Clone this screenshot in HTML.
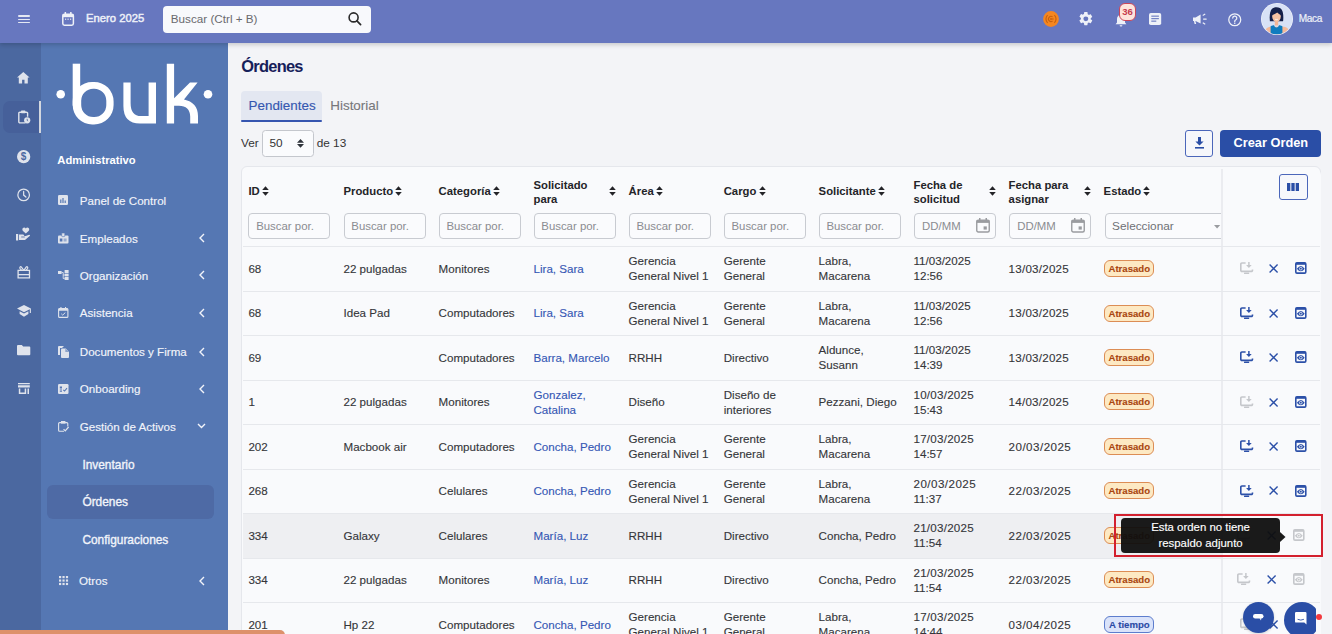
<!DOCTYPE html>
<html><head><meta charset="utf-8">
<style>
*{box-sizing:border-box;margin:0;padding:0}
html,body{width:1332px;height:634px;overflow:hidden;background:#f3f4f7;font-family:"Liberation Sans",sans-serif;color:#333;position:relative}
.abs{position:absolute}
.t{position:absolute;white-space:nowrap}
svg{overflow:visible}
</style></head><body>
<div class="abs" style="left:0.00px;top:43.00px;width:41.00px;height:591.00px;background:#4b68a0"></div>
<div class="abs" style="left:41.00px;top:43.00px;width:187.00px;height:591.00px;background:#5577b3"></div>
<div class="abs" style="left:3.40px;top:100.70px;width:36.10px;height:32.30px;background:#46609a;border-radius:7px 0 0 7px"></div>
<div class="abs" style="left:38.90px;top:100.50px;width:2.30px;height:32.70px;background:#d3d7df"></div>
<svg class="abs" style="left:17.40px;top:72.30px;" width="12.6" height="11.4" viewBox="0 0 12.6 11.4"><path fill="#dfe3ec" d="M6.3 0L0 5.6h1.8v5.8h3.3V7.8h2.4v3.6h3.3V5.6h1.8z"/></svg>
<svg class="abs" style="left:18.00px;top:110.20px;" width="12.5" height="14" viewBox="0 0 12.5 14"><path fill="none" stroke="#dfe3ec" stroke-width="1.4" d="M7.5 12.9H1.9a1.1 1.1 0 0 1-1.1-1.1V3.3a1.1 1.1 0 0 1 1.1-1.1h6.6a1.1 1.1 0 0 1 1.1 1.1v3.4"/><rect x="3" y="0.6" width="4.4" height="2.6" rx=".6" fill="#dfe3ec"/><circle cx="9.2" cy="10.3" r="3.1" fill="#dfe3ec"/><path d="M9.2 8.8v1.6l.9.6" stroke="#46609a" stroke-width=".8" fill="none"/></svg>
<svg class="abs" style="left:17.00px;top:150.00px;" width="13.3" height="13.3" viewBox="0 0 13.3 13.3"><circle cx="6.65" cy="6.65" r="6.65" fill="#dfe3ec"/><text x="6.65" y="10.3" font-size="10" font-weight="bold" text-anchor="middle" fill="#4b68a0" font-family="Liberation Sans">$</text></svg>
<svg class="abs" style="left:17.00px;top:188.00px;" width="13.3" height="13.8" viewBox="0 0 14 14"><circle cx="7" cy="7" r="6.1" fill="none" stroke="#dfe3ec" stroke-width="1.3"/><path d="M7 3.4V7.2l2.4 2" fill="none" stroke="#dfe3ec" stroke-width="1.3" stroke-linecap="round"/></svg>
<svg class="abs" style="left:15.70px;top:227.30px;" width="14.6" height="13.7" viewBox="0 0 14.6 13.7"><path fill="#dfe3ec" d="M9.8 6.6L7 4C5.8 2.9 6.3.6 8.1.6c.8 0 1.3.4 1.7.9.4-.5.9-.9 1.7-.9 1.8 0 2.3 2.3 1.1 3.4z"/><rect x="0" y="7" width="2.2" height="6.5" fill="#dfe3ec"/><path fill="#dfe3ec" d="M3 7.6h3.4c1 0 1.7.5 1.9 1.3h1.4l3.5-1.2c.8 0 1.2.9.5 1.4l-4.7 3.8H3z"/><path fill="#4b68a0" d="M5.2 9.6h3.6v.8H5.2z"/></svg>
<svg class="abs" style="left:16.70px;top:265.80px;" width="13.6" height="12.7" viewBox="0 0 13.6 12.7"><path fill="none" stroke="#dfe3ec" stroke-width="1.3" d="M1.1 4.3h11.4v7.6H1.1z"/><path fill="#dfe3ec" d="M1 8h11.6v1.3H1z"/><path fill="none" stroke="#dfe3ec" stroke-width="1.2" d="M6.8 4.3L4.3 1c-.9-.9-2 .4-1.2 1.6L4.6 4.3M6.8 4.3L9.3 1c.9-.9 2 .4 1.2 1.6L9 4.3"/></svg>
<svg class="abs" style="left:16.70px;top:305.20px;" width="14.6" height="11.7" viewBox="0 0 14.6 11.7"><path fill="#dfe3ec" d="M7 0L0 3.6l7 3.7 5.8-3V8h1.1V3.6z"/><path fill="#dfe3ec" d="M2.6 6.2v2.8L7 11.7l4.4-2.7V6.2L7 8.5z"/></svg>
<svg class="abs" style="left:17.00px;top:345.00px;" width="13.3" height="10.3" viewBox="0 0 13.3 10.3"><path fill="#dfe3ec" d="M0 1A1 1 0 0 1 1 0h3.8l1.4 1.5H12.3a1 1 0 0 1 1 1V9.3a1 1 0 0 1-1 1H1a1 1 0 0 1-1-1z"/></svg>
<svg class="abs" style="left:17.60px;top:383.20px;" width="11.8" height="11" viewBox="0 0 11.8 11"><path fill="#dfe3ec" d="M0 0h11.8v1.3H0zM0 2.2h11.8v2.4H0zM.8 5.5h1.5v3.9h4.4V5.5h1.5V11H.8zM9.5 5.5H11V11H9.5z"/></svg>
<svg class="abs" style="left:0.00px;top:0.00px;" width="228" height="130" viewBox="0 0 228 130"><circle cx="60.7" cy="94.2" r="4.3" fill="#ffffff"/><circle cx="208" cy="94.2" r="4.3" fill="#ffffff"/><rect x="72.7" y="63.7" width="7.5" height="42" fill="#ffffff"/><path fill="#ffffff" fill-rule="evenodd" d="M92.2 81.9H94.1A19.5 19.5 0 0 1 113.6 101.4V105.0A19.5 19.5 0 0 1 94.1 124.5H92.2A19.5 19.5 0 0 1 72.7 105.0V101.4A19.5 19.5 0 0 1 92.2 81.9Z M93.2 88.7H94.30000000000001A12 12 0 0 1 106.30000000000001 100.7V105.1A12 12 0 0 1 94.30000000000001 117.1H93.2A12 12 0 0 1 81.2 105.1V100.7A12 12 0 0 1 93.2 88.7Z"/><path fill="#ffffff" d="M123.4 82.4H130.6V103Q130.6 116.1 141 116.1H148.6V82.4H156V123.6H140Q123.4 123.6 123.4 106Z"/><path fill="#ffffff" d="M166.8 63.7H174.1V98.3L190 82.4H197.6L184 99.6C193 101.5 198 107 198 116V123.6H190.2V116.5C190.2 109.5 186 105.7 179 105.7H174.1V123.6H166.8Z"/></svg>
<div class="t " style="left:57.30px;top:153.50px;font-size:11.2px;line-height:13.44px;font-weight:bold;color:#fff;">Administrativo</div>
<div class="t " style="left:79.80px;top:193.72px;font-size:11.6px;line-height:13.92px;font-weight:normal;color:#f2f4fa;-webkit-text-stroke:0.15px #f2f4fa">Panel de Control</div>
<svg class="abs" style="left:58.00px;top:195.20px;" width="10" height="10" viewBox="0 0 10 10"><rect width="10" height="10" rx="1.3" fill="#dfe3ec"/><path fill="#5577b3" d="M2.2 4.5h1.2v3.5H2.2zM4.4 3h1.2v5H4.4zM6.6 5.5h1.2V8H6.6z"/></svg>
<div class="t " style="left:79.80px;top:231.82px;font-size:11.6px;line-height:13.92px;font-weight:normal;color:#f2f4fa;-webkit-text-stroke:0.15px #f2f4fa">Empleados</div>
<svg class="abs" style="left:198.50px;top:233.30px;" width="6" height="10" viewBox="0 0 6 10"><path d="M5 1L1 5l4 4" fill="none" stroke="#f2f4fa" stroke-width="1.4"/></svg>
<svg class="abs" style="left:58.00px;top:232.80px;" width="10.5" height="10.5" viewBox="0 0 10.5 10.5"><rect x="0" y="2.4" width="10.5" height="8.1" rx="1" fill="#dfe3ec"/><rect x="3.7" y="0" width="3.1" height="3.6" rx=".6" fill="#dfe3ec" stroke="#5577b3" stroke-width=".6"/><path fill="#5577b3" d="M1.8 5.5h2.6v3H1.8zM5.6 5.8h3v.8h-3zM5.6 7.4h3v.8h-3z"/></svg>
<div class="t " style="left:79.80px;top:268.82px;font-size:11.6px;line-height:13.92px;font-weight:normal;color:#f2f4fa;-webkit-text-stroke:0.15px #f2f4fa">Organización</div>
<svg class="abs" style="left:198.50px;top:270.30px;" width="6" height="10" viewBox="0 0 6 10"><path d="M5 1L1 5l4 4" fill="none" stroke="#f2f4fa" stroke-width="1.4"/></svg>
<svg class="abs" style="left:58.00px;top:270.30px;" width="11" height="10" viewBox="0 0 11 10"><rect x="0" y="1" width="3.6" height="3" fill="#dfe3ec"/><rect x="6.6" y="0" width="4" height="3" fill="#dfe3ec"/><rect x="6.6" y="3.6" width="4" height="2.8" fill="#dfe3ec"/><rect x="6.6" y="7" width="4" height="3" fill="#dfe3ec"/><path d="M3.6 2.5h1.6v6h1.4M5.2 5h1.4" stroke="#dfe3ec" stroke-width=".9" fill="none"/></svg>
<div class="t " style="left:79.80px;top:306.42px;font-size:11.6px;line-height:13.92px;font-weight:normal;color:#f2f4fa;-webkit-text-stroke:0.15px #f2f4fa">Asistencia</div>
<svg class="abs" style="left:198.50px;top:307.90px;" width="6" height="10" viewBox="0 0 6 10"><path d="M5 1L1 5l4 4" fill="none" stroke="#f2f4fa" stroke-width="1.4"/></svg>
<svg class="abs" style="left:58.00px;top:307.40px;" width="10.5" height="11" viewBox="0 0 10.5 11"><rect x=".6" y="1.6" width="9.3" height="8.8" rx="1" fill="none" stroke="#dfe3ec" stroke-width="1.1"/><path fill="#dfe3ec" d="M.6 1.6h9.3v2.2H.6zM2.4 0h1.1v2H2.4zM7 0h1.1v2H7z"/><path d="M3.3 6.8l1.4 1.3 2.6-2.5" fill="none" stroke="#dfe3ec" stroke-width="1"/></svg>
<div class="t " style="left:79.80px;top:345.22px;font-size:11.6px;line-height:13.92px;font-weight:normal;color:#f2f4fa;-webkit-text-stroke:0.15px #f2f4fa">Documentos y Firma</div>
<svg class="abs" style="left:198.50px;top:346.70px;" width="6" height="10" viewBox="0 0 6 10"><path d="M5 1L1 5l4 4" fill="none" stroke="#f2f4fa" stroke-width="1.4"/></svg>
<svg class="abs" style="left:57.50px;top:345.70px;" width="11" height="12" viewBox="0 0 11 12"><path fill="#dfe3ec" d="M0 1a1 1 0 0 1 1-1h5L4 2H2v7H0z"/><path fill="#dfe3ec" d="M3 3.5a1 1 0 0 1 1-1h3.8L11 5.7V11a1 1 0 0 1-1 1H4a1 1 0 0 1-1-1z"/><path fill="#5577b3" d="M7.3 2.6v3.5H11z" opacity=".6"/></svg>
<div class="t " style="left:79.80px;top:382.42px;font-size:11.6px;line-height:13.92px;font-weight:normal;color:#f2f4fa;-webkit-text-stroke:0.15px #f2f4fa">Onboarding</div>
<svg class="abs" style="left:198.50px;top:383.90px;" width="6" height="10" viewBox="0 0 6 10"><path d="M5 1L1 5l4 4" fill="none" stroke="#f2f4fa" stroke-width="1.4"/></svg>
<svg class="abs" style="left:58.00px;top:383.90px;" width="10.5" height="10" viewBox="0 0 10.5 10"><rect width="10.5" height="10" rx="1.2" fill="#dfe3ec"/><path fill="#5577b3" d="M1.8 2.4h2.2v2.2H1.8zM1.8 5.6h2.2v.9H1.8zM1.8 7.2h2.2v.9H1.8z"/><path d="M5.3 5.8l1.3 1.2 2.4-2.8" fill="none" stroke="#5577b3" stroke-width="1.1"/></svg>
<div class="t " style="left:79.80px;top:419.72px;font-size:11.6px;line-height:13.92px;font-weight:normal;color:#f2f4fa;-webkit-text-stroke:0.15px #f2f4fa">Gestión de Activos</div>
<svg class="abs" style="left:196.50px;top:423.20px;" width="9" height="6" viewBox="0 0 9 6"><path d="M1 1l3.5 3.5L8 1" fill="none" stroke="#f2f4fa" stroke-width="1.4"/></svg>
<svg class="abs" style="left:58.00px;top:420.70px;" width="11" height="11" viewBox="0 0 11 11"><path d="M6 10.2H1.6a1 1 0 0 1-1-1V2.6a1 1 0 0 1 1-1h7.2a1 1 0 0 1 1 1v3" fill="none" stroke="#dfe3ec" stroke-width="1.1"/><path fill="#dfe3ec" d="M3 0h4.4v2.6H3z"/><path d="M5.6 8.2l1.6 1.6L10.6 6" fill="none" stroke="#dfe3ec" stroke-width="1.2"/></svg>
<div class="abs" style="left:47.00px;top:485.40px;width:167.10px;height:34.10px;background:#4e6aa5;border-radius:6px"></div>
<div class="t " style="left:82.40px;top:457.94px;font-size:11.9px;line-height:14.28px;font-weight:normal;color:#f2f4fa;-webkit-text-stroke:0.35px #f2f4fa">Inventario</div>
<div class="t " style="left:82.40px;top:495.34px;font-size:11.9px;line-height:14.28px;font-weight:normal;color:#f2f4fa;-webkit-text-stroke:0.35px #f2f4fa">Órdenes</div>
<div class="t " style="left:82.40px;top:532.54px;font-size:11.9px;line-height:14.28px;font-weight:normal;color:#f2f4fa;-webkit-text-stroke:0.35px #f2f4fa">Configuraciones</div>
<div class="t " style="left:79.10px;top:574.12px;font-size:11.6px;line-height:13.92px;font-weight:normal;color:#f2f4fa;-webkit-text-stroke:0.15px #f2f4fa">Otros</div>
<svg class="abs" style="left:58.50px;top:576.00px;" width="9.2" height="9.2" viewBox="0 0 9.2 9.2"><rect x="0.0" y="0.0" width="2.2" height="2.2" fill="#dfe3ec"/><rect x="0.0" y="3.45" width="2.2" height="2.2" fill="#dfe3ec"/><rect x="0.0" y="6.9" width="2.2" height="2.2" fill="#dfe3ec"/><rect x="3.45" y="0.0" width="2.2" height="2.2" fill="#dfe3ec"/><rect x="3.45" y="3.45" width="2.2" height="2.2" fill="#dfe3ec"/><rect x="3.45" y="6.9" width="2.2" height="2.2" fill="#dfe3ec"/><rect x="6.9" y="0.0" width="2.2" height="2.2" fill="#dfe3ec"/><rect x="6.9" y="3.45" width="2.2" height="2.2" fill="#dfe3ec"/><rect x="6.9" y="6.9" width="2.2" height="2.2" fill="#dfe3ec"/></svg>
<svg class="abs" style="left:198.50px;top:576.00px;" width="6" height="10" viewBox="0 0 6 10"><path d="M5 1L1 5l4 4" fill="none" stroke="#f2f4fa" stroke-width="1.4"/></svg>
<div class="t " style="left:241.30px;top:57.38px;font-size:16.4px;line-height:19.68px;font-weight:bold;color:#16205a;letter-spacing:-0.72px">Órdenes</div>
<div class="abs" style="left:241.30px;top:90.80px;width:80.70px;height:30.70px;background:#e3e7f1;border-radius:4px 4px 0 0"></div>
<div class="abs" style="left:241.30px;top:119.80px;width:80.70px;height:1.90px;background:#3656b0;border-radius:1px"></div>
<div class="t " style="left:248.60px;top:98.12px;font-size:13.4px;line-height:16.08px;font-weight:normal;color:#3557b0;-webkit-text-stroke:0.15px #3557b0">Pendientes</div>
<div class="t " style="left:330.30px;top:98.12px;font-size:13.4px;line-height:16.08px;font-weight:normal;color:#76777b;-webkit-text-stroke:0.1px #76777b">Historial</div>
<div class="t " style="left:241.00px;top:135.83px;font-size:11.8px;line-height:14.16px;font-weight:normal;color:#333;">Ver</div>
<div class="abs" style="left:262.40px;top:130.20px;width:51.20px;height:26.60px;background:#fafbfd;border:1px solid #c4c7cd;border-radius:3.5px"></div>
<div class="t " style="left:269.50px;top:136.03px;font-size:11.8px;line-height:14.16px;font-weight:normal;color:#333;">50</div>
<svg class="abs" style="left:296.90px;top:139.00px;" width="7" height="8.8" viewBox="0 0 7 8.8"><path d="M3.5 0L7 3.7H0zM3.5 8.8L7 5.1H0z" fill="#2f343b"/></svg>
<div class="t " style="left:316.70px;top:135.83px;font-size:11.8px;line-height:14.16px;font-weight:normal;color:#333;">de 13</div>
<div class="abs" style="left:1185.10px;top:130.00px;width:28.00px;height:26.50px;background:#f6f7fb;border:1px solid #4b66ba;border-radius:3px"></div>
<svg class="abs" style="left:1193.60px;top:137.30px;" width="11" height="12" viewBox="0 0 11 12"><path d="M4 0h3v4.6h2.6L5.5 8.6 1.4 4.6H4z" fill="#2a4ea6"/><rect x="1" y="10" width="9" height="1.6" fill="#2a4ea6"/></svg>
<div class="abs" style="left:1219.80px;top:130.00px;width:100.90px;height:26.50px;background:#2a4ea6;border-radius:4px"></div>
<div class="t " style="left:1233.50px;top:135.48px;font-size:12.8px;line-height:15.36px;font-weight:bold;color:#fff;">Crear Orden</div>
<div class="abs" style="left:241.10px;top:165.80px;width:1080.10px;height:554.20px;background:#f9fafc;border:1px solid #e5e7ec;border-radius:6px"></div>
<div class="abs" style="left:248.40px;top:185.33px;height:13.5px;display:flex;align-items:center;white-space:nowrap;font-size:11.3px;line-height:13.5px;font-weight:bold;color:#242428">ID<svg width="7" height="10" viewBox="0 0 7 10" style="flex:none;margin-left:2.2px;position:relative;top:-1px"><path d="M3.5 0.2L6.8 4.1H.2zM3.5 9.8L6.8 5.9H.2z" fill="#242428"/></svg></div>
<div class="abs" style="left:343.50px;top:185.33px;height:13.5px;display:flex;align-items:center;white-space:nowrap;font-size:11.3px;line-height:13.5px;font-weight:bold;color:#242428">Producto<svg width="7" height="10" viewBox="0 0 7 10" style="flex:none;margin-left:2.2px;position:relative;top:-1px"><path d="M3.5 0.2L6.8 4.1H.2zM3.5 9.8L6.8 5.9H.2z" fill="#242428"/></svg></div>
<div class="abs" style="left:438.60px;top:185.33px;height:13.5px;display:flex;align-items:center;white-space:nowrap;font-size:11.3px;line-height:13.5px;font-weight:bold;color:#242428">Categoría<svg width="7" height="10" viewBox="0 0 7 10" style="flex:none;margin-left:2.2px;position:relative;top:-1px"><path d="M3.5 0.2L6.8 4.1H.2zM3.5 9.8L6.8 5.9H.2z" fill="#242428"/></svg></div>
<div class="t " style="left:533.50px;top:178.50px;font-size:11.3px;line-height:13.56px;font-weight:bold;color:#242428;">Solicitado</div>
<div class="t " style="left:533.50px;top:192.70px;font-size:11.3px;line-height:13.56px;font-weight:bold;color:#242428;">para</div>
<svg class="abs" style="left:608.80px;top:186.00px;" width="7" height="10" viewBox="0 0 7 10"><path d="M3.5 0.2L6.8 4.1H.2zM3.5 9.8L6.8 5.9H.2z" fill="#242428"/></svg>
<div class="abs" style="left:628.60px;top:185.33px;height:13.5px;display:flex;align-items:center;white-space:nowrap;font-size:11.3px;line-height:13.5px;font-weight:bold;color:#242428">Área<svg width="7" height="10" viewBox="0 0 7 10" style="flex:none;margin-left:2.2px;position:relative;top:-1px"><path d="M3.5 0.2L6.8 4.1H.2zM3.5 9.8L6.8 5.9H.2z" fill="#242428"/></svg></div>
<div class="abs" style="left:723.70px;top:185.33px;height:13.5px;display:flex;align-items:center;white-space:nowrap;font-size:11.3px;line-height:13.5px;font-weight:bold;color:#242428">Cargo<svg width="7" height="10" viewBox="0 0 7 10" style="flex:none;margin-left:2.2px;position:relative;top:-1px"><path d="M3.5 0.2L6.8 4.1H.2zM3.5 9.8L6.8 5.9H.2z" fill="#242428"/></svg></div>
<div class="abs" style="left:818.60px;top:185.33px;height:13.5px;display:flex;align-items:center;white-space:nowrap;font-size:11.3px;line-height:13.5px;font-weight:bold;color:#242428">Solicitante<svg width="7" height="10" viewBox="0 0 7 10" style="flex:none;margin-left:2.2px;position:relative;top:-1px"><path d="M3.5 0.2L6.8 4.1H.2zM3.5 9.8L6.8 5.9H.2z" fill="#242428"/></svg></div>
<div class="t " style="left:913.50px;top:178.50px;font-size:11.3px;line-height:13.56px;font-weight:bold;color:#242428;">Fecha de</div>
<div class="t " style="left:913.50px;top:192.70px;font-size:11.3px;line-height:13.56px;font-weight:bold;color:#242428;">solicitud</div>
<svg class="abs" style="left:989.00px;top:186.00px;" width="7" height="10" viewBox="0 0 7 10"><path d="M3.5 0.2L6.8 4.1H.2zM3.5 9.8L6.8 5.9H.2z" fill="#242428"/></svg>
<div class="t " style="left:1008.60px;top:178.50px;font-size:11.3px;line-height:13.56px;font-weight:bold;color:#242428;">Fecha para</div>
<div class="t " style="left:1008.60px;top:192.70px;font-size:11.3px;line-height:13.56px;font-weight:bold;color:#242428;">asignar</div>
<svg class="abs" style="left:1084.00px;top:186.00px;" width="7" height="10" viewBox="0 0 7 10"><path d="M3.5 0.2L6.8 4.1H.2zM3.5 9.8L6.8 5.9H.2z" fill="#242428"/></svg>
<div class="abs" style="left:1103.60px;top:185.33px;height:13.5px;display:flex;align-items:center;white-space:nowrap;font-size:11.3px;line-height:13.5px;font-weight:bold;color:#242428">Estado<svg width="7" height="10" viewBox="0 0 7 10" style="flex:none;margin-left:2.2px;position:relative;top:-1px"><path d="M3.5 0.2L6.8 4.1H.2zM3.5 9.8L6.8 5.9H.2z" fill="#242428"/></svg></div>
<div class="abs" style="left:248.40px;top:213.2px;width:82px;height:26.2px;border:1px solid #c8cbd1;border-radius:4px;background:#fafbfd;overflow:hidden"><div class="t" style="left:6.8px;top:4.9px;font-size:11.4px;line-height:15px;color:#8a8c91">Buscar por.</div></div>
<div class="abs" style="left:343.50px;top:213.2px;width:82px;height:26.2px;border:1px solid #c8cbd1;border-radius:4px;background:#fafbfd;overflow:hidden"><div class="t" style="left:6.8px;top:4.9px;font-size:11.4px;line-height:15px;color:#8a8c91">Buscar por.</div></div>
<div class="abs" style="left:438.60px;top:213.2px;width:82px;height:26.2px;border:1px solid #c8cbd1;border-radius:4px;background:#fafbfd;overflow:hidden"><div class="t" style="left:6.8px;top:4.9px;font-size:11.4px;line-height:15px;color:#8a8c91">Buscar por.</div></div>
<div class="abs" style="left:533.50px;top:213.2px;width:82px;height:26.2px;border:1px solid #c8cbd1;border-radius:4px;background:#fafbfd;overflow:hidden"><div class="t" style="left:6.8px;top:4.9px;font-size:11.4px;line-height:15px;color:#8a8c91">Buscar por.</div></div>
<div class="abs" style="left:628.60px;top:213.2px;width:82px;height:26.2px;border:1px solid #c8cbd1;border-radius:4px;background:#fafbfd;overflow:hidden"><div class="t" style="left:6.8px;top:4.9px;font-size:11.4px;line-height:15px;color:#8a8c91">Buscar por.</div></div>
<div class="abs" style="left:723.70px;top:213.2px;width:82px;height:26.2px;border:1px solid #c8cbd1;border-radius:4px;background:#fafbfd;overflow:hidden"><div class="t" style="left:6.8px;top:4.9px;font-size:11.4px;line-height:15px;color:#8a8c91">Buscar por.</div></div>
<div class="abs" style="left:818.60px;top:213.2px;width:82px;height:26.2px;border:1px solid #c8cbd1;border-radius:4px;background:#fafbfd;overflow:hidden"><div class="t" style="left:6.8px;top:4.9px;font-size:11.4px;line-height:15px;color:#8a8c91">Buscar por.</div></div>
<div class="abs" style="left:914.30px;top:213.2px;width:81.7px;height:26.2px;border:1px solid #c8cbd1;border-radius:4px;background:#fafbfd;overflow:hidden"><div class="t" style="left:6.8px;top:4.9px;font-size:11.4px;line-height:15px;color:#8a8c91">DD/MM</div></div>
<svg class="abs" style="left:975.80px;top:218.40px;" width="14" height="14.7" viewBox="0 0 14 14.7"><rect x=".75" y="2.1" width="12.5" height="11.85" rx="1.5" fill="none" stroke="#9a9ca0" stroke-width="1.4"/><rect x=".75" y="2.1" width="12.5" height="2.8" fill="#9a9ca0"/><rect x="3" y="0" width="1.5" height="3" fill="#9a9ca0"/><rect x="9.5" y="0" width="1.5" height="3" fill="#9a9ca0"/><rect x="7.6" y="8.4" width="3.2" height="3.2" fill="#9a9ca0"/></svg>
<div class="abs" style="left:1009.40px;top:213.2px;width:81.7px;height:26.2px;border:1px solid #c8cbd1;border-radius:4px;background:#fafbfd;overflow:hidden"><div class="t" style="left:6.8px;top:4.9px;font-size:11.4px;line-height:15px;color:#8a8c91">DD/MM</div></div>
<svg class="abs" style="left:1070.90px;top:218.40px;" width="14" height="14.7" viewBox="0 0 14 14.7"><rect x=".75" y="2.1" width="12.5" height="11.85" rx="1.5" fill="none" stroke="#9a9ca0" stroke-width="1.4"/><rect x=".75" y="2.1" width="12.5" height="2.8" fill="#9a9ca0"/><rect x="3" y="0" width="1.5" height="3" fill="#9a9ca0"/><rect x="9.5" y="0" width="1.5" height="3" fill="#9a9ca0"/><rect x="7.6" y="8.4" width="3.2" height="3.2" fill="#9a9ca0"/></svg>
<div class="abs" style="left:1104.6px;top:213.2px;width:140px;height:26.2px;border:1px solid #c8cbd1;border-radius:4px;background:#fafbfd"><div class="t" style="left:6.5px;top:4.6px;font-size:11.8px;line-height:15px;color:#6e7075">Seleccionar</div></div>
<svg class="abs" style="left:1213.70px;top:224.80px;" width="6.2" height="3.4" viewBox="0 0 6.2 3.4"><path d="M0 0h6.2L3.1 3.4z" fill="#9a9ca0"/></svg>
<div class="abs" style="left:242.60px;top:246.00px;width:1077.60px;height:1.00px;background:#e6e8ec"></div>
<div class="t " style="left:248.40px;top:261.95px;font-size:11.6px;line-height:13.92px;font-weight:normal;color:#35363a;-webkit-text-stroke:0.12px #35363a">68</div>
<div class="t " style="left:343.50px;top:261.95px;font-size:11.6px;line-height:13.92px;font-weight:normal;color:#35363a;-webkit-text-stroke:0.12px #35363a">22 pulgadas</div>
<div class="t " style="left:438.60px;top:261.95px;font-size:11.6px;line-height:13.92px;font-weight:normal;color:#35363a;-webkit-text-stroke:0.12px #35363a">Monitores</div>
<div class="t " style="left:533.50px;top:261.95px;font-size:11.6px;line-height:13.92px;font-weight:normal;color:#3557b4;-webkit-text-stroke:0.12px #3557b4">Lira, Sara</div>
<div class="t " style="left:628.60px;top:254.35px;font-size:11.6px;line-height:13.92px;font-weight:normal;color:#35363a;-webkit-text-stroke:0.12px #35363a">Gerencia</div>
<div class="t " style="left:628.60px;top:269.35px;font-size:11.6px;line-height:13.92px;font-weight:normal;color:#35363a;-webkit-text-stroke:0.12px #35363a">General Nivel 1</div>
<div class="t " style="left:723.70px;top:254.35px;font-size:11.6px;line-height:13.92px;font-weight:normal;color:#35363a;-webkit-text-stroke:0.12px #35363a">Gerente</div>
<div class="t " style="left:723.70px;top:269.35px;font-size:11.6px;line-height:13.92px;font-weight:normal;color:#35363a;-webkit-text-stroke:0.12px #35363a">General</div>
<div class="t " style="left:818.60px;top:254.35px;font-size:11.6px;line-height:13.92px;font-weight:normal;color:#35363a;-webkit-text-stroke:0.12px #35363a">Labra,</div>
<div class="t " style="left:818.60px;top:269.35px;font-size:11.6px;line-height:13.92px;font-weight:normal;color:#35363a;-webkit-text-stroke:0.12px #35363a">Macarena</div>
<div class="t " style="left:913.50px;top:254.35px;font-size:11.6px;line-height:13.92px;font-weight:normal;color:#35363a;-webkit-text-stroke:0.12px #35363a;letter-spacing:0.000px">11/03/2025</div>
<div class="t " style="left:913.50px;top:269.35px;font-size:11.6px;line-height:13.92px;font-weight:normal;color:#35363a;-webkit-text-stroke:0.12px #35363a">12:56</div>
<div class="t " style="left:1008.60px;top:261.95px;font-size:11.6px;line-height:13.92px;font-weight:normal;color:#35363a;-webkit-text-stroke:0.12px #35363a;letter-spacing:0.233px">13/03/2025</div>
<div class="abs" style="left:1104.3px;top:260.12px;width:50px;height:17px;border-radius:6px;background:#fde9c3;border:1px solid #dc8d55;color:#a9460f;font-size:9.6px;font-weight:bold;-webkit-text-stroke:0.1px #a9460f;line-height:15px;text-align:center">Atrasado</div>
<div class="abs" style="left:242.60px;top:290.95px;width:1077.60px;height:1.00px;background:#e6e8ec"></div>
<div class="t " style="left:248.40px;top:306.40px;font-size:11.6px;line-height:13.92px;font-weight:normal;color:#35363a;-webkit-text-stroke:0.12px #35363a">68</div>
<div class="t " style="left:343.50px;top:306.40px;font-size:11.6px;line-height:13.92px;font-weight:normal;color:#35363a;-webkit-text-stroke:0.12px #35363a">Idea Pad</div>
<div class="t " style="left:438.60px;top:306.40px;font-size:11.6px;line-height:13.92px;font-weight:normal;color:#35363a;-webkit-text-stroke:0.12px #35363a">Computadores</div>
<div class="t " style="left:533.50px;top:306.40px;font-size:11.6px;line-height:13.92px;font-weight:normal;color:#3557b4;-webkit-text-stroke:0.12px #3557b4">Lira, Sara</div>
<div class="t " style="left:628.60px;top:298.80px;font-size:11.6px;line-height:13.92px;font-weight:normal;color:#35363a;-webkit-text-stroke:0.12px #35363a">Gerencia</div>
<div class="t " style="left:628.60px;top:313.80px;font-size:11.6px;line-height:13.92px;font-weight:normal;color:#35363a;-webkit-text-stroke:0.12px #35363a">General Nivel 1</div>
<div class="t " style="left:723.70px;top:298.80px;font-size:11.6px;line-height:13.92px;font-weight:normal;color:#35363a;-webkit-text-stroke:0.12px #35363a">Gerente</div>
<div class="t " style="left:723.70px;top:313.80px;font-size:11.6px;line-height:13.92px;font-weight:normal;color:#35363a;-webkit-text-stroke:0.12px #35363a">General</div>
<div class="t " style="left:818.60px;top:298.80px;font-size:11.6px;line-height:13.92px;font-weight:normal;color:#35363a;-webkit-text-stroke:0.12px #35363a">Labra,</div>
<div class="t " style="left:818.60px;top:313.80px;font-size:11.6px;line-height:13.92px;font-weight:normal;color:#35363a;-webkit-text-stroke:0.12px #35363a">Macarena</div>
<div class="t " style="left:913.50px;top:298.80px;font-size:11.6px;line-height:13.92px;font-weight:normal;color:#35363a;-webkit-text-stroke:0.12px #35363a;letter-spacing:0.000px">11/03/2025</div>
<div class="t " style="left:913.50px;top:313.80px;font-size:11.6px;line-height:13.92px;font-weight:normal;color:#35363a;-webkit-text-stroke:0.12px #35363a">12:56</div>
<div class="t " style="left:1008.60px;top:306.40px;font-size:11.6px;line-height:13.92px;font-weight:normal;color:#35363a;-webkit-text-stroke:0.12px #35363a;letter-spacing:0.233px">13/03/2025</div>
<div class="abs" style="left:1104.3px;top:304.57px;width:50px;height:17px;border-radius:6px;background:#fde9c3;border:1px solid #dc8d55;color:#a9460f;font-size:9.6px;font-weight:bold;-webkit-text-stroke:0.1px #a9460f;line-height:15px;text-align:center">Atrasado</div>
<div class="abs" style="left:242.60px;top:335.40px;width:1077.60px;height:1.00px;background:#e6e8ec"></div>
<div class="t " style="left:248.40px;top:350.85px;font-size:11.6px;line-height:13.92px;font-weight:normal;color:#35363a;-webkit-text-stroke:0.12px #35363a">69</div>
<div class="t " style="left:438.60px;top:350.85px;font-size:11.6px;line-height:13.92px;font-weight:normal;color:#35363a;-webkit-text-stroke:0.12px #35363a">Computadores</div>
<div class="t " style="left:533.50px;top:350.85px;font-size:11.6px;line-height:13.92px;font-weight:normal;color:#3557b4;-webkit-text-stroke:0.12px #3557b4">Barra, Marcelo</div>
<div class="t " style="left:628.60px;top:350.85px;font-size:11.6px;line-height:13.92px;font-weight:normal;color:#35363a;-webkit-text-stroke:0.12px #35363a">RRHH</div>
<div class="t " style="left:723.70px;top:350.85px;font-size:11.6px;line-height:13.92px;font-weight:normal;color:#35363a;-webkit-text-stroke:0.12px #35363a">Directivo</div>
<div class="t " style="left:818.60px;top:343.25px;font-size:11.6px;line-height:13.92px;font-weight:normal;color:#35363a;-webkit-text-stroke:0.12px #35363a">Aldunce,</div>
<div class="t " style="left:818.60px;top:358.25px;font-size:11.6px;line-height:13.92px;font-weight:normal;color:#35363a;-webkit-text-stroke:0.12px #35363a">Susann</div>
<div class="t " style="left:913.50px;top:343.25px;font-size:11.6px;line-height:13.92px;font-weight:normal;color:#35363a;-webkit-text-stroke:0.12px #35363a;letter-spacing:0.000px">11/03/2025</div>
<div class="t " style="left:913.50px;top:358.25px;font-size:11.6px;line-height:13.92px;font-weight:normal;color:#35363a;-webkit-text-stroke:0.12px #35363a">14:39</div>
<div class="t " style="left:1008.60px;top:350.85px;font-size:11.6px;line-height:13.92px;font-weight:normal;color:#35363a;-webkit-text-stroke:0.12px #35363a;letter-spacing:0.233px">13/03/2025</div>
<div class="abs" style="left:1104.3px;top:349.02px;width:50px;height:17px;border-radius:6px;background:#fde9c3;border:1px solid #dc8d55;color:#a9460f;font-size:9.6px;font-weight:bold;-webkit-text-stroke:0.1px #a9460f;line-height:15px;text-align:center">Atrasado</div>
<div class="abs" style="left:242.60px;top:379.85px;width:1077.60px;height:1.00px;background:#e6e8ec"></div>
<div class="t " style="left:248.40px;top:395.30px;font-size:11.6px;line-height:13.92px;font-weight:normal;color:#35363a;-webkit-text-stroke:0.12px #35363a">1</div>
<div class="t " style="left:343.50px;top:395.30px;font-size:11.6px;line-height:13.92px;font-weight:normal;color:#35363a;-webkit-text-stroke:0.12px #35363a">22 pulgadas</div>
<div class="t " style="left:438.60px;top:395.30px;font-size:11.6px;line-height:13.92px;font-weight:normal;color:#35363a;-webkit-text-stroke:0.12px #35363a">Monitores</div>
<div class="t " style="left:533.50px;top:387.70px;font-size:11.6px;line-height:13.92px;font-weight:normal;color:#3557b4;-webkit-text-stroke:0.12px #3557b4">Gonzalez,</div>
<div class="t " style="left:533.50px;top:402.70px;font-size:11.6px;line-height:13.92px;font-weight:normal;color:#3557b4;-webkit-text-stroke:0.12px #3557b4">Catalina</div>
<div class="t " style="left:628.60px;top:395.30px;font-size:11.6px;line-height:13.92px;font-weight:normal;color:#35363a;-webkit-text-stroke:0.12px #35363a">Diseño</div>
<div class="t " style="left:723.70px;top:387.70px;font-size:11.6px;line-height:13.92px;font-weight:normal;color:#35363a;-webkit-text-stroke:0.12px #35363a">Diseño de</div>
<div class="t " style="left:723.70px;top:402.70px;font-size:11.6px;line-height:13.92px;font-weight:normal;color:#35363a;-webkit-text-stroke:0.12px #35363a">interiores</div>
<div class="t " style="left:818.60px;top:395.30px;font-size:11.6px;line-height:13.92px;font-weight:normal;color:#35363a;-webkit-text-stroke:0.12px #35363a">Pezzani, Diego</div>
<div class="t " style="left:913.50px;top:387.70px;font-size:11.6px;line-height:13.92px;font-weight:normal;color:#35363a;-webkit-text-stroke:0.12px #35363a;letter-spacing:0.233px">10/03/2025</div>
<div class="t " style="left:913.50px;top:402.70px;font-size:11.6px;line-height:13.92px;font-weight:normal;color:#35363a;-webkit-text-stroke:0.12px #35363a">15:43</div>
<div class="t " style="left:1008.60px;top:395.30px;font-size:11.6px;line-height:13.92px;font-weight:normal;color:#35363a;-webkit-text-stroke:0.12px #35363a;letter-spacing:0.233px">14/03/2025</div>
<div class="abs" style="left:1104.3px;top:393.48px;width:50px;height:17px;border-radius:6px;background:#fde9c3;border:1px solid #dc8d55;color:#a9460f;font-size:9.6px;font-weight:bold;-webkit-text-stroke:0.1px #a9460f;line-height:15px;text-align:center">Atrasado</div>
<div class="abs" style="left:242.60px;top:424.30px;width:1077.60px;height:1.00px;background:#e6e8ec"></div>
<div class="t " style="left:248.40px;top:439.75px;font-size:11.6px;line-height:13.92px;font-weight:normal;color:#35363a;-webkit-text-stroke:0.12px #35363a">202</div>
<div class="t " style="left:343.50px;top:439.75px;font-size:11.6px;line-height:13.92px;font-weight:normal;color:#35363a;-webkit-text-stroke:0.12px #35363a">Macbook air</div>
<div class="t " style="left:438.60px;top:439.75px;font-size:11.6px;line-height:13.92px;font-weight:normal;color:#35363a;-webkit-text-stroke:0.12px #35363a">Computadores</div>
<div class="t " style="left:533.50px;top:439.75px;font-size:11.6px;line-height:13.92px;font-weight:normal;color:#3557b4;-webkit-text-stroke:0.12px #3557b4">Concha, Pedro</div>
<div class="t " style="left:628.60px;top:432.15px;font-size:11.6px;line-height:13.92px;font-weight:normal;color:#35363a;-webkit-text-stroke:0.12px #35363a">Gerencia</div>
<div class="t " style="left:628.60px;top:447.15px;font-size:11.6px;line-height:13.92px;font-weight:normal;color:#35363a;-webkit-text-stroke:0.12px #35363a">General Nivel 1</div>
<div class="t " style="left:723.70px;top:432.15px;font-size:11.6px;line-height:13.92px;font-weight:normal;color:#35363a;-webkit-text-stroke:0.12px #35363a">Gerente</div>
<div class="t " style="left:723.70px;top:447.15px;font-size:11.6px;line-height:13.92px;font-weight:normal;color:#35363a;-webkit-text-stroke:0.12px #35363a">General</div>
<div class="t " style="left:818.60px;top:432.15px;font-size:11.6px;line-height:13.92px;font-weight:normal;color:#35363a;-webkit-text-stroke:0.12px #35363a">Labra,</div>
<div class="t " style="left:818.60px;top:447.15px;font-size:11.6px;line-height:13.92px;font-weight:normal;color:#35363a;-webkit-text-stroke:0.12px #35363a">Macarena</div>
<div class="t " style="left:913.50px;top:432.15px;font-size:11.6px;line-height:13.92px;font-weight:normal;color:#35363a;-webkit-text-stroke:0.12px #35363a;letter-spacing:0.233px">17/03/2025</div>
<div class="t " style="left:913.50px;top:447.15px;font-size:11.6px;line-height:13.92px;font-weight:normal;color:#35363a;-webkit-text-stroke:0.12px #35363a">14:57</div>
<div class="t " style="left:1008.60px;top:439.75px;font-size:11.6px;line-height:13.92px;font-weight:normal;color:#35363a;-webkit-text-stroke:0.12px #35363a;letter-spacing:0.467px">20/03/2025</div>
<div class="abs" style="left:1104.3px;top:437.93px;width:50px;height:17px;border-radius:6px;background:#fde9c3;border:1px solid #dc8d55;color:#a9460f;font-size:9.6px;font-weight:bold;-webkit-text-stroke:0.1px #a9460f;line-height:15px;text-align:center">Atrasado</div>
<div class="abs" style="left:242.60px;top:468.75px;width:1077.60px;height:1.00px;background:#e6e8ec"></div>
<div class="t " style="left:248.40px;top:484.20px;font-size:11.6px;line-height:13.92px;font-weight:normal;color:#35363a;-webkit-text-stroke:0.12px #35363a">268</div>
<div class="t " style="left:438.60px;top:484.20px;font-size:11.6px;line-height:13.92px;font-weight:normal;color:#35363a;-webkit-text-stroke:0.12px #35363a">Celulares</div>
<div class="t " style="left:533.50px;top:484.20px;font-size:11.6px;line-height:13.92px;font-weight:normal;color:#3557b4;-webkit-text-stroke:0.12px #3557b4">Concha, Pedro</div>
<div class="t " style="left:628.60px;top:476.60px;font-size:11.6px;line-height:13.92px;font-weight:normal;color:#35363a;-webkit-text-stroke:0.12px #35363a">Gerencia</div>
<div class="t " style="left:628.60px;top:491.60px;font-size:11.6px;line-height:13.92px;font-weight:normal;color:#35363a;-webkit-text-stroke:0.12px #35363a">General Nivel 1</div>
<div class="t " style="left:723.70px;top:476.60px;font-size:11.6px;line-height:13.92px;font-weight:normal;color:#35363a;-webkit-text-stroke:0.12px #35363a">Gerente</div>
<div class="t " style="left:723.70px;top:491.60px;font-size:11.6px;line-height:13.92px;font-weight:normal;color:#35363a;-webkit-text-stroke:0.12px #35363a">General</div>
<div class="t " style="left:818.60px;top:476.60px;font-size:11.6px;line-height:13.92px;font-weight:normal;color:#35363a;-webkit-text-stroke:0.12px #35363a">Labra,</div>
<div class="t " style="left:818.60px;top:491.60px;font-size:11.6px;line-height:13.92px;font-weight:normal;color:#35363a;-webkit-text-stroke:0.12px #35363a">Macarena</div>
<div class="t " style="left:913.50px;top:476.60px;font-size:11.6px;line-height:13.92px;font-weight:normal;color:#35363a;-webkit-text-stroke:0.12px #35363a;letter-spacing:0.467px">20/03/2025</div>
<div class="t " style="left:913.50px;top:491.60px;font-size:11.6px;line-height:13.92px;font-weight:normal;color:#35363a;-webkit-text-stroke:0.12px #35363a">11:37</div>
<div class="t " style="left:1008.60px;top:484.20px;font-size:11.6px;line-height:13.92px;font-weight:normal;color:#35363a;-webkit-text-stroke:0.12px #35363a;letter-spacing:0.467px">22/03/2025</div>
<div class="abs" style="left:1104.3px;top:482.38px;width:50px;height:17px;border-radius:6px;background:#fde9c3;border:1px solid #dc8d55;color:#a9460f;font-size:9.6px;font-weight:bold;-webkit-text-stroke:0.1px #a9460f;line-height:15px;text-align:center">Atrasado</div>
<div class="abs" style="left:242.60px;top:513.70px;width:979.90px;height:44.15px;background:#eeeff2"></div>
<div class="abs" style="left:242.60px;top:513.20px;width:1077.60px;height:1.00px;background:#e6e8ec"></div>
<div class="t " style="left:248.40px;top:528.65px;font-size:11.6px;line-height:13.92px;font-weight:normal;color:#35363a;-webkit-text-stroke:0.12px #35363a">334</div>
<div class="t " style="left:343.50px;top:528.65px;font-size:11.6px;line-height:13.92px;font-weight:normal;color:#35363a;-webkit-text-stroke:0.12px #35363a">Galaxy</div>
<div class="t " style="left:438.60px;top:528.65px;font-size:11.6px;line-height:13.92px;font-weight:normal;color:#35363a;-webkit-text-stroke:0.12px #35363a">Celulares</div>
<div class="t " style="left:533.50px;top:528.65px;font-size:11.6px;line-height:13.92px;font-weight:normal;color:#3557b4;-webkit-text-stroke:0.12px #3557b4">María, Luz</div>
<div class="t " style="left:628.60px;top:528.65px;font-size:11.6px;line-height:13.92px;font-weight:normal;color:#35363a;-webkit-text-stroke:0.12px #35363a">RRHH</div>
<div class="t " style="left:723.70px;top:528.65px;font-size:11.6px;line-height:13.92px;font-weight:normal;color:#35363a;-webkit-text-stroke:0.12px #35363a">Directivo</div>
<div class="t " style="left:818.60px;top:528.65px;font-size:11.6px;line-height:13.92px;font-weight:normal;color:#35363a;-webkit-text-stroke:0.12px #35363a">Concha, Pedro</div>
<div class="t " style="left:913.50px;top:521.05px;font-size:11.6px;line-height:13.92px;font-weight:normal;color:#35363a;-webkit-text-stroke:0.12px #35363a;letter-spacing:0.233px">21/03/2025</div>
<div class="t " style="left:913.50px;top:536.05px;font-size:11.6px;line-height:13.92px;font-weight:normal;color:#35363a;-webkit-text-stroke:0.12px #35363a">11:54</div>
<div class="t " style="left:1008.60px;top:528.65px;font-size:11.6px;line-height:13.92px;font-weight:normal;color:#35363a;-webkit-text-stroke:0.12px #35363a;letter-spacing:0.467px">22/03/2025</div>
<div class="abs" style="left:1104.3px;top:526.83px;width:50px;height:17px;border-radius:6px;background:#fde9c3;border:1px solid #dc8d55;color:#a9460f;font-size:9.6px;font-weight:bold;-webkit-text-stroke:0.1px #a9460f;line-height:15px;text-align:center">Atrasado</div>
<div class="abs" style="left:242.60px;top:557.65px;width:1077.60px;height:1.00px;background:#e6e8ec"></div>
<div class="t " style="left:248.40px;top:573.10px;font-size:11.6px;line-height:13.92px;font-weight:normal;color:#35363a;-webkit-text-stroke:0.12px #35363a">334</div>
<div class="t " style="left:343.50px;top:573.10px;font-size:11.6px;line-height:13.92px;font-weight:normal;color:#35363a;-webkit-text-stroke:0.12px #35363a">22 pulgadas</div>
<div class="t " style="left:438.60px;top:573.10px;font-size:11.6px;line-height:13.92px;font-weight:normal;color:#35363a;-webkit-text-stroke:0.12px #35363a">Monitores</div>
<div class="t " style="left:533.50px;top:573.10px;font-size:11.6px;line-height:13.92px;font-weight:normal;color:#3557b4;-webkit-text-stroke:0.12px #3557b4">María, Luz</div>
<div class="t " style="left:628.60px;top:573.10px;font-size:11.6px;line-height:13.92px;font-weight:normal;color:#35363a;-webkit-text-stroke:0.12px #35363a">RRHH</div>
<div class="t " style="left:723.70px;top:573.10px;font-size:11.6px;line-height:13.92px;font-weight:normal;color:#35363a;-webkit-text-stroke:0.12px #35363a">Directivo</div>
<div class="t " style="left:818.60px;top:573.10px;font-size:11.6px;line-height:13.92px;font-weight:normal;color:#35363a;-webkit-text-stroke:0.12px #35363a">Concha, Pedro</div>
<div class="t " style="left:913.50px;top:565.50px;font-size:11.6px;line-height:13.92px;font-weight:normal;color:#35363a;-webkit-text-stroke:0.12px #35363a;letter-spacing:0.233px">21/03/2025</div>
<div class="t " style="left:913.50px;top:580.50px;font-size:11.6px;line-height:13.92px;font-weight:normal;color:#35363a;-webkit-text-stroke:0.12px #35363a">11:54</div>
<div class="t " style="left:1008.60px;top:573.10px;font-size:11.6px;line-height:13.92px;font-weight:normal;color:#35363a;-webkit-text-stroke:0.12px #35363a;letter-spacing:0.467px">22/03/2025</div>
<div class="abs" style="left:1104.3px;top:571.28px;width:50px;height:17px;border-radius:6px;background:#fde9c3;border:1px solid #dc8d55;color:#a9460f;font-size:9.6px;font-weight:bold;-webkit-text-stroke:0.1px #a9460f;line-height:15px;text-align:center">Atrasado</div>
<div class="abs" style="left:242.60px;top:602.10px;width:1077.60px;height:1.00px;background:#e6e8ec"></div>
<div class="t " style="left:248.40px;top:617.55px;font-size:11.6px;line-height:13.92px;font-weight:normal;color:#35363a;-webkit-text-stroke:0.12px #35363a">201</div>
<div class="t " style="left:343.50px;top:617.55px;font-size:11.6px;line-height:13.92px;font-weight:normal;color:#35363a;-webkit-text-stroke:0.12px #35363a">Hp 22</div>
<div class="t " style="left:438.60px;top:617.55px;font-size:11.6px;line-height:13.92px;font-weight:normal;color:#35363a;-webkit-text-stroke:0.12px #35363a">Computadores</div>
<div class="t " style="left:533.50px;top:617.55px;font-size:11.6px;line-height:13.92px;font-weight:normal;color:#3557b4;-webkit-text-stroke:0.12px #3557b4">Concha, Pedro</div>
<div class="t " style="left:628.60px;top:609.95px;font-size:11.6px;line-height:13.92px;font-weight:normal;color:#35363a;-webkit-text-stroke:0.12px #35363a">Gerencia</div>
<div class="t " style="left:628.60px;top:624.95px;font-size:11.6px;line-height:13.92px;font-weight:normal;color:#35363a;-webkit-text-stroke:0.12px #35363a">General Nivel 1</div>
<div class="t " style="left:723.70px;top:609.95px;font-size:11.6px;line-height:13.92px;font-weight:normal;color:#35363a;-webkit-text-stroke:0.12px #35363a">Gerente</div>
<div class="t " style="left:723.70px;top:624.95px;font-size:11.6px;line-height:13.92px;font-weight:normal;color:#35363a;-webkit-text-stroke:0.12px #35363a">General</div>
<div class="t " style="left:818.60px;top:609.95px;font-size:11.6px;line-height:13.92px;font-weight:normal;color:#35363a;-webkit-text-stroke:0.12px #35363a">Labra,</div>
<div class="t " style="left:818.60px;top:624.95px;font-size:11.6px;line-height:13.92px;font-weight:normal;color:#35363a;-webkit-text-stroke:0.12px #35363a">Macarena</div>
<div class="t " style="left:913.50px;top:609.95px;font-size:11.6px;line-height:13.92px;font-weight:normal;color:#35363a;-webkit-text-stroke:0.12px #35363a;letter-spacing:0.233px">17/03/2025</div>
<div class="t " style="left:913.50px;top:624.95px;font-size:11.6px;line-height:13.92px;font-weight:normal;color:#35363a;-webkit-text-stroke:0.12px #35363a">14:44</div>
<div class="t " style="left:1008.60px;top:617.55px;font-size:11.6px;line-height:13.92px;font-weight:normal;color:#35363a;-webkit-text-stroke:0.12px #35363a;letter-spacing:0.467px">03/04/2025</div>
<div class="abs" style="left:1104.3px;top:615.73px;width:50px;height:17px;border-radius:6px;background:#dae3fa;border:1px solid #5d7dcd;color:#2a4aa5;font-size:9.6px;font-weight:bold;-webkit-text-stroke:0.1px #2a4aa5;line-height:15px;text-align:center">A tiempo</div>
<div class="abs" style="left:1221.30px;top:168.50px;width:99.70px;height:471.50px;background:#f9fafc;border-left:2.6px solid #ebecf0;border-radius:0 6px 0 0"></div>
<div class="abs" style="left:1221.30px;top:246.00px;width:98.90px;height:1.00px;background:#e6e8ec"></div>
<svg class="abs" style="left:1239.90px;top:262.33px;" width="13.2" height="12" viewBox="0 0 13.2 12"><path d="M5.6 1.05H1.9a1.1 1.1 0 0 0-1.1 1.1V8.3a1.1 1.1 0 0 0 1.1 1.1h9.5a1.1 1.1 0 0 0 1.1-1.1V7.6" fill="none" stroke="#c5c7cb" stroke-width="1.6"/><path d="M8.9 0v4" fill="none" stroke="#c5c7cb" stroke-width="1.5"/><path d="M6.1 2.9h5.6L8.9 6z" fill="#c5c7cb"/><rect x="4" y="10.4" width="5.2" height="1.6" rx=".5" fill="#c5c7cb"/></svg>
<svg class="abs" style="left:1268.80px;top:264.23px;" width="9.2" height="9.1" viewBox="0 0 9.2 9.1"><path d="M.6.6l8 7.9M8.6.6l-8 7.9" stroke="#2c50a8" stroke-width="1.4" fill="none"/></svg>
<svg class="abs" style="left:1294.50px;top:262.33px;" width="11.6" height="11.9" viewBox="0 0 11.6 11.9"><rect x=".8" y=".8" width="10" height="10.3" rx="1.2" fill="none" stroke="#2c50a8" stroke-width="1.6"/><rect x=".8" y=".8" width="10" height="2" fill="#2c50a8"/><path d="M1.9 6.7Q5.8 1.4 9.7 6.7 5.8 12 1.9 6.7z" fill="#2c50a8"/><circle cx="5.8" cy="6.7" r="1.35" fill="none" stroke="#fff" stroke-width=".75"/></svg>
<div class="abs" style="left:1221.30px;top:290.95px;width:98.90px;height:1.00px;background:#e6e8ec"></div>
<svg class="abs" style="left:1239.90px;top:306.78px;" width="13.2" height="12" viewBox="0 0 13.2 12"><path d="M5.6 1.05H1.9a1.1 1.1 0 0 0-1.1 1.1V8.3a1.1 1.1 0 0 0 1.1 1.1h9.5a1.1 1.1 0 0 0 1.1-1.1V7.6" fill="none" stroke="#2c50a8" stroke-width="1.6"/><path d="M8.9 0v4" fill="none" stroke="#2c50a8" stroke-width="1.5"/><path d="M6.1 2.9h5.6L8.9 6z" fill="#2c50a8"/><rect x="4" y="10.4" width="5.2" height="1.6" rx=".5" fill="#2c50a8"/></svg>
<svg class="abs" style="left:1268.80px;top:308.68px;" width="9.2" height="9.1" viewBox="0 0 9.2 9.1"><path d="M.6.6l8 7.9M8.6.6l-8 7.9" stroke="#2c50a8" stroke-width="1.4" fill="none"/></svg>
<svg class="abs" style="left:1294.50px;top:306.78px;" width="11.6" height="11.9" viewBox="0 0 11.6 11.9"><rect x=".8" y=".8" width="10" height="10.3" rx="1.2" fill="none" stroke="#2c50a8" stroke-width="1.6"/><rect x=".8" y=".8" width="10" height="2" fill="#2c50a8"/><path d="M1.9 6.7Q5.8 1.4 9.7 6.7 5.8 12 1.9 6.7z" fill="#2c50a8"/><circle cx="5.8" cy="6.7" r="1.35" fill="none" stroke="#fff" stroke-width=".75"/></svg>
<div class="abs" style="left:1221.30px;top:335.40px;width:98.90px;height:1.00px;background:#e6e8ec"></div>
<svg class="abs" style="left:1239.90px;top:351.23px;" width="13.2" height="12" viewBox="0 0 13.2 12"><path d="M5.6 1.05H1.9a1.1 1.1 0 0 0-1.1 1.1V8.3a1.1 1.1 0 0 0 1.1 1.1h9.5a1.1 1.1 0 0 0 1.1-1.1V7.6" fill="none" stroke="#2c50a8" stroke-width="1.6"/><path d="M8.9 0v4" fill="none" stroke="#2c50a8" stroke-width="1.5"/><path d="M6.1 2.9h5.6L8.9 6z" fill="#2c50a8"/><rect x="4" y="10.4" width="5.2" height="1.6" rx=".5" fill="#2c50a8"/></svg>
<svg class="abs" style="left:1268.80px;top:353.12px;" width="9.2" height="9.1" viewBox="0 0 9.2 9.1"><path d="M.6.6l8 7.9M8.6.6l-8 7.9" stroke="#2c50a8" stroke-width="1.4" fill="none"/></svg>
<svg class="abs" style="left:1294.50px;top:351.23px;" width="11.6" height="11.9" viewBox="0 0 11.6 11.9"><rect x=".8" y=".8" width="10" height="10.3" rx="1.2" fill="none" stroke="#2c50a8" stroke-width="1.6"/><rect x=".8" y=".8" width="10" height="2" fill="#2c50a8"/><path d="M1.9 6.7Q5.8 1.4 9.7 6.7 5.8 12 1.9 6.7z" fill="#2c50a8"/><circle cx="5.8" cy="6.7" r="1.35" fill="none" stroke="#fff" stroke-width=".75"/></svg>
<div class="abs" style="left:1221.30px;top:379.85px;width:98.90px;height:1.00px;background:#e6e8ec"></div>
<svg class="abs" style="left:1239.90px;top:395.68px;" width="13.2" height="12" viewBox="0 0 13.2 12"><path d="M5.6 1.05H1.9a1.1 1.1 0 0 0-1.1 1.1V8.3a1.1 1.1 0 0 0 1.1 1.1h9.5a1.1 1.1 0 0 0 1.1-1.1V7.6" fill="none" stroke="#c5c7cb" stroke-width="1.6"/><path d="M8.9 0v4" fill="none" stroke="#c5c7cb" stroke-width="1.5"/><path d="M6.1 2.9h5.6L8.9 6z" fill="#c5c7cb"/><rect x="4" y="10.4" width="5.2" height="1.6" rx=".5" fill="#c5c7cb"/></svg>
<svg class="abs" style="left:1268.80px;top:397.58px;" width="9.2" height="9.1" viewBox="0 0 9.2 9.1"><path d="M.6.6l8 7.9M8.6.6l-8 7.9" stroke="#2c50a8" stroke-width="1.4" fill="none"/></svg>
<svg class="abs" style="left:1294.50px;top:395.68px;" width="11.6" height="11.9" viewBox="0 0 11.6 11.9"><rect x=".8" y=".8" width="10" height="10.3" rx="1.2" fill="none" stroke="#2c50a8" stroke-width="1.6"/><rect x=".8" y=".8" width="10" height="2" fill="#2c50a8"/><path d="M1.9 6.7Q5.8 1.4 9.7 6.7 5.8 12 1.9 6.7z" fill="#2c50a8"/><circle cx="5.8" cy="6.7" r="1.35" fill="none" stroke="#fff" stroke-width=".75"/></svg>
<div class="abs" style="left:1221.30px;top:424.30px;width:98.90px;height:1.00px;background:#e6e8ec"></div>
<svg class="abs" style="left:1239.90px;top:440.13px;" width="13.2" height="12" viewBox="0 0 13.2 12"><path d="M5.6 1.05H1.9a1.1 1.1 0 0 0-1.1 1.1V8.3a1.1 1.1 0 0 0 1.1 1.1h9.5a1.1 1.1 0 0 0 1.1-1.1V7.6" fill="none" stroke="#2c50a8" stroke-width="1.6"/><path d="M8.9 0v4" fill="none" stroke="#2c50a8" stroke-width="1.5"/><path d="M6.1 2.9h5.6L8.9 6z" fill="#2c50a8"/><rect x="4" y="10.4" width="5.2" height="1.6" rx=".5" fill="#2c50a8"/></svg>
<svg class="abs" style="left:1268.80px;top:442.03px;" width="9.2" height="9.1" viewBox="0 0 9.2 9.1"><path d="M.6.6l8 7.9M8.6.6l-8 7.9" stroke="#2c50a8" stroke-width="1.4" fill="none"/></svg>
<svg class="abs" style="left:1294.50px;top:440.13px;" width="11.6" height="11.9" viewBox="0 0 11.6 11.9"><rect x=".8" y=".8" width="10" height="10.3" rx="1.2" fill="none" stroke="#2c50a8" stroke-width="1.6"/><rect x=".8" y=".8" width="10" height="2" fill="#2c50a8"/><path d="M1.9 6.7Q5.8 1.4 9.7 6.7 5.8 12 1.9 6.7z" fill="#2c50a8"/><circle cx="5.8" cy="6.7" r="1.35" fill="none" stroke="#fff" stroke-width=".75"/></svg>
<div class="abs" style="left:1221.30px;top:468.75px;width:98.90px;height:1.00px;background:#e6e8ec"></div>
<svg class="abs" style="left:1239.90px;top:484.58px;" width="13.2" height="12" viewBox="0 0 13.2 12"><path d="M5.6 1.05H1.9a1.1 1.1 0 0 0-1.1 1.1V8.3a1.1 1.1 0 0 0 1.1 1.1h9.5a1.1 1.1 0 0 0 1.1-1.1V7.6" fill="none" stroke="#2c50a8" stroke-width="1.6"/><path d="M8.9 0v4" fill="none" stroke="#2c50a8" stroke-width="1.5"/><path d="M6.1 2.9h5.6L8.9 6z" fill="#2c50a8"/><rect x="4" y="10.4" width="5.2" height="1.6" rx=".5" fill="#2c50a8"/></svg>
<svg class="abs" style="left:1268.80px;top:486.48px;" width="9.2" height="9.1" viewBox="0 0 9.2 9.1"><path d="M.6.6l8 7.9M8.6.6l-8 7.9" stroke="#2c50a8" stroke-width="1.4" fill="none"/></svg>
<svg class="abs" style="left:1294.50px;top:484.58px;" width="11.6" height="11.9" viewBox="0 0 11.6 11.9"><rect x=".8" y=".8" width="10" height="10.3" rx="1.2" fill="none" stroke="#2c50a8" stroke-width="1.6"/><rect x=".8" y=".8" width="10" height="2" fill="#2c50a8"/><path d="M1.9 6.7Q5.8 1.4 9.7 6.7 5.8 12 1.9 6.7z" fill="#2c50a8"/><circle cx="5.8" cy="6.7" r="1.35" fill="none" stroke="#fff" stroke-width=".75"/></svg>
<div class="abs" style="left:1221.30px;top:513.20px;width:98.90px;height:1.00px;background:#e6e8ec"></div>
<svg class="abs" style="left:1237.00px;top:529.03px;" width="13.2" height="12" viewBox="0 0 13.2 12"><path d="M5.6 1.05H1.9a1.1 1.1 0 0 0-1.1 1.1V8.3a1.1 1.1 0 0 0 1.1 1.1h9.5a1.1 1.1 0 0 0 1.1-1.1V7.6" fill="none" stroke="#c5c7cb" stroke-width="1.6"/><path d="M8.9 0v4" fill="none" stroke="#c5c7cb" stroke-width="1.5"/><path d="M6.1 2.9h5.6L8.9 6z" fill="#c5c7cb"/><rect x="4" y="10.4" width="5.2" height="1.6" rx=".5" fill="#c5c7cb"/></svg>
<svg class="abs" style="left:1266.70px;top:530.93px;" width="9.2" height="9.1" viewBox="0 0 9.2 9.1"><path d="M.6.6l8 7.9M8.6.6l-8 7.9" stroke="#2c50a8" stroke-width="1.4" fill="none"/></svg>
<svg class="abs" style="left:1293.20px;top:529.03px;" width="11.6" height="11.9" viewBox="0 0 11.6 11.9"><rect x=".8" y=".8" width="10" height="10.3" rx="1.2" fill="none" stroke="#c5c7cb" stroke-width="1.6"/><rect x=".8" y=".8" width="10" height="2" fill="#c5c7cb"/><path d="M1.9 6.7Q5.8 1.4 9.7 6.7 5.8 12 1.9 6.7z" fill="#c5c7cb"/><circle cx="5.8" cy="6.7" r="1.35" fill="none" stroke="#fff" stroke-width=".75"/></svg>
<div class="abs" style="left:1221.30px;top:557.65px;width:98.90px;height:1.00px;background:#e6e8ec"></div>
<svg class="abs" style="left:1237.00px;top:573.48px;" width="13.2" height="12" viewBox="0 0 13.2 12"><path d="M5.6 1.05H1.9a1.1 1.1 0 0 0-1.1 1.1V8.3a1.1 1.1 0 0 0 1.1 1.1h9.5a1.1 1.1 0 0 0 1.1-1.1V7.6" fill="none" stroke="#c5c7cb" stroke-width="1.6"/><path d="M8.9 0v4" fill="none" stroke="#c5c7cb" stroke-width="1.5"/><path d="M6.1 2.9h5.6L8.9 6z" fill="#c5c7cb"/><rect x="4" y="10.4" width="5.2" height="1.6" rx=".5" fill="#c5c7cb"/></svg>
<svg class="abs" style="left:1266.70px;top:575.38px;" width="9.2" height="9.1" viewBox="0 0 9.2 9.1"><path d="M.6.6l8 7.9M8.6.6l-8 7.9" stroke="#2c50a8" stroke-width="1.4" fill="none"/></svg>
<svg class="abs" style="left:1293.20px;top:573.48px;" width="11.6" height="11.9" viewBox="0 0 11.6 11.9"><rect x=".8" y=".8" width="10" height="10.3" rx="1.2" fill="none" stroke="#c5c7cb" stroke-width="1.6"/><rect x=".8" y=".8" width="10" height="2" fill="#c5c7cb"/><path d="M1.9 6.7Q5.8 1.4 9.7 6.7 5.8 12 1.9 6.7z" fill="#c5c7cb"/><circle cx="5.8" cy="6.7" r="1.35" fill="none" stroke="#fff" stroke-width=".75"/></svg>
<div class="abs" style="left:1221.30px;top:602.10px;width:98.90px;height:1.00px;background:#e6e8ec"></div>
<svg class="abs" style="left:1239.90px;top:617.93px;" width="13.2" height="12" viewBox="0 0 13.2 12"><path d="M5.6 1.05H1.9a1.1 1.1 0 0 0-1.1 1.1V8.3a1.1 1.1 0 0 0 1.1 1.1h9.5a1.1 1.1 0 0 0 1.1-1.1V7.6" fill="none" stroke="#c5c7cb" stroke-width="1.6"/><path d="M8.9 0v4" fill="none" stroke="#c5c7cb" stroke-width="1.5"/><path d="M6.1 2.9h5.6L8.9 6z" fill="#c5c7cb"/><rect x="4" y="10.4" width="5.2" height="1.6" rx=".5" fill="#c5c7cb"/></svg>
<svg class="abs" style="left:1268.80px;top:619.83px;" width="9.2" height="9.1" viewBox="0 0 9.2 9.1"><path d="M.6.6l8 7.9M8.6.6l-8 7.9" stroke="#2c50a8" stroke-width="1.4" fill="none"/></svg>
<svg class="abs" style="left:1294.50px;top:617.93px;" width="11.6" height="11.9" viewBox="0 0 11.6 11.9"><rect x=".8" y=".8" width="10" height="10.3" rx="1.2" fill="none" stroke="#2c50a8" stroke-width="1.6"/><rect x=".8" y=".8" width="10" height="2" fill="#2c50a8"/><path d="M1.9 6.7Q5.8 1.4 9.7 6.7 5.8 12 1.9 6.7z" fill="#2c50a8"/><circle cx="5.8" cy="6.7" r="1.35" fill="none" stroke="#fff" stroke-width=".75"/></svg>
<div class="abs" style="left:1279.40px;top:173.50px;width:28.30px;height:26.00px;background:#f6f7fb;border:1px solid #4b66ba;border-radius:3px"></div>
<svg class="abs" style="left:1287.40px;top:182.50px;" width="12" height="8" viewBox="0 0 12 8"><rect x="0" y="0" width="3.3" height="8" fill="#2a4ea6"/><rect x="4.35" y="0" width="3.3" height="8" fill="#2a4ea6"/><rect x="8.7" y="0" width="3.3" height="8" fill="#2a4ea6"/></svg>
<div class="abs" style="left:1121.3px;top:518px;width:158.5px;height:35.4px;background:rgba(14,14,14,.95);border-radius:4px"></div>
<svg class="abs" style="left:1279.80px;top:531.50px;" width="5.5" height="10" viewBox="0 0 5.5 10"><path d="M0 0L5.5 5 0 10z" fill="rgba(14,14,14,.95)"/></svg>
<div class="t " style="left:1121.30px;top:521.11px;font-size:11.4px;line-height:13.68px;font-weight:normal;color:#fff;width:158.5px;text-align:center;-webkit-text-stroke:0.15px #fff">Esta orden no tiene</div>
<div class="t " style="left:1121.30px;top:536.81px;font-size:11.4px;line-height:13.68px;font-weight:normal;color:#fff;width:158.5px;text-align:center;-webkit-text-stroke:0.15px #fff">respaldo adjunto</div>
<div class="abs" style="left:1113.90px;top:514.00px;width:209.10px;height:42.90px;border:2px solid #d3202e"></div>
<div class="abs" style="left:1243.1px;top:601.6px;width:31px;height:31px;border-radius:50%;background:#2a4ea6;box-shadow:0 1px 3px rgba(0,0,0,.15)"></div>
<svg class="abs" style="left:1253.40px;top:614.20px;" width="10.5" height="6.5" viewBox="0 0 10.5 6.5"><rect x="0" y="0" width="10.5" height="4.5" rx="2.2" fill="#fff"/><path d="M6.5 4.2l1.5 2.2.3-2.2z" fill="#fff"/></svg>
<div class="abs" style="left:1284px;top:601.6px;width:31.5px;height:40px;overflow:hidden"><div style="position:absolute;left:0;top:0;width:36px;height:36px;border-radius:50%;background:#2a4ea6"></div></div>
<svg class="abs" style="left:1294.50px;top:611.50px;" width="11.5" height="12.5" viewBox="0 0 11.5 12.5"><path d="M0 1.2A1.2 1.2 0 0 1 1.2 0h9.1a1.2 1.2 0 0 1 1.2 1.2V12.5L9.3 10.6H1.2A1.2 1.2 0 0 1 0 9.4z" fill="#fff"/><path d="M2.6 7.3q3.2 1.6 6.3 0" stroke="#2a4ea6" stroke-width=".9" fill="none"/></svg>
<div class="abs" style="left:1316px;top:613.7px;width:6.4px;height:6.4px;border-radius:50%;background:#f23a3f"></div>
<div class="abs" style="left:0.00px;top:630.10px;width:284.80px;height:9.90px;background:#dd916b;border-radius:0 5px 0 0"></div>
<div class="abs" style="left:0.00px;top:0.00px;width:1332.00px;height:43.00px;background:#6777bf;box-shadow:0 1.5px 4px rgba(0,0,0,.17)"></div>
<div class="abs" style="left:17.80px;top:15.20px;width:12.20px;height:1.50px;background:#e4e8f3;border-radius:1px"></div>
<div class="abs" style="left:17.80px;top:18.60px;width:12.20px;height:1.50px;background:#e4e8f3;border-radius:1px"></div>
<div class="abs" style="left:17.80px;top:21.90px;width:12.20px;height:1.50px;background:#e4e8f3;border-radius:1px"></div>
<svg class="abs" style="left:62.00px;top:12.00px;" width="12.2" height="14" viewBox="0 0 12.2 14"><rect x="0.8" y="2.2" width="10.6" height="11" rx="1.6" fill="none" stroke="#eef1f8" stroke-width="1.5"/><rect x="0.8" y="2.2" width="10.6" height="3" fill="#eef1f8"/><rect x="2.6" y="0" width="1.5" height="3" fill="#eef1f8"/><rect x="8.1" y="0" width="1.5" height="3" fill="#eef1f8"/><rect x="3" y="6.6" width="1.2" height="1.2" fill="#eef1f8"/><rect x="5.5" y="6.6" width="1.2" height="1.2" fill="#eef1f8"/><rect x="8" y="6.6" width="1.2" height="1.2" fill="#eef1f8"/></svg>
<div class="t " style="left:86.00px;top:12.15px;font-size:11.25px;line-height:13.5px;font-weight:normal;color:#eef1f8;-webkit-text-stroke:0.45px #eef1f8">Enero 2025</div>
<div class="abs" style="left:163.00px;top:5.50px;width:207.70px;height:27.20px;background:#f8f9fc;border-radius:4px"></div>
<div class="t " style="left:170.80px;top:12.13px;font-size:11.7px;line-height:14.04px;font-weight:normal;color:#6a6a6e;">Buscar (Ctrl + B)</div>
<svg class="abs" style="left:347.50px;top:12.00px;" width="14" height="14" viewBox="0 0 14 14"><circle cx="5.6" cy="5.4" r="4.5" fill="none" stroke="#2a2a2a" stroke-width="1.6"/><line x1="8.9" y1="8.8" x2="12.6" y2="12.6" stroke="#2a2a2a" stroke-width="1.7" stroke-linecap="round"/></svg>
<svg class="abs" style="left:1042.50px;top:11.20px;" width="16" height="16" viewBox="0 0 16 16"><circle cx="8" cy="8" r="7.9" fill="#f5861f"/><path d="M4.6 4.2A5.2 5.2 0 0 0 4.6 11.8M11.4 4.2A5.2 5.2 0 0 1 11.4 11.8" fill="none" stroke="#c5600e" stroke-width="1.1"/><path d="M9.6 5.9A2.6 2.6 0 1 0 9.6 10.1" fill="none" stroke="#c5600e" stroke-width="1.1"/><circle cx="8" cy="8" r=".9" fill="#c5600e"/><path d="M8.6 8h2" stroke="#c5600e" stroke-width="1.1"/></svg>
<svg class="abs" style="left:1078.80px;top:12.30px;" width="13.7" height="13.7" viewBox="2.6 2 18.8 20"><path fill="#eef1f8" d="M19.14 12.94c.04-.3.06-.61.06-.94 0-.32-.02-.64-.07-.94l2.03-1.58a.49.49 0 0 0 .12-.61l-1.92-3.32a.49.49 0 0 0-.59-.22l-2.39.96c-.5-.38-1.03-.7-1.62-.94l-.36-2.54A.48.48 0 0 0 13.92 2h-3.84c-.24 0-.43.17-.47.41l-.36 2.54c-.59.24-1.13.57-1.62.94l-2.39-.96a.49.49 0 0 0-.59.22L2.74 8.47a.47.47 0 0 0 .12.61l2.03 1.58c-.05.3-.09.63-.09.94s.02.64.07.94l-2.03 1.58a.49.49 0 0 0-.12.61l1.92 3.32c.12.22.37.29.59.22l2.39-.96c.5.38 1.03.7 1.62.94l.36 2.54c.05.24.24.41.48.41h3.84c.24 0 .44-.17.47-.41l.36-2.54c.59-.24 1.13-.56 1.62-.94l2.39.96c.22.08.47 0 .59-.22l1.92-3.32c.12-.22.07-.47-.12-.61l-2.01-1.58zM12 15.6A3.6 3.6 0 1 1 12 8.4a3.6 3.6 0 0 1 0 7.2z"/></svg>
<svg class="abs" style="left:1114.50px;top:13.50px;" width="12" height="13" viewBox="0 0 12 13"><path fill="#eef1f8" d="M6 0.8c-2.4 0-4 1.9-4 4.3v3.3L0.6 10.3h10.8L10 8.4V5.1C10 2.7 8.4 0.8 6 0.8z"/><path fill="#eef1f8" d="M4.6 11.2h2.8a1.4 1.4 0 0 1-2.8 0z"/></svg>
<div class="abs" style="left:1119.1px;top:3.2px;width:16.8px;height:17.4px;border-radius:6px;background:#fde4dc;border:1px solid #c9465b;color:#c53b4e;font-size:9.5px;font-weight:bold;line-height:15.5px;text-align:center">36</div>
<svg class="abs" style="left:1149.00px;top:13.00px;" width="12.2" height="12" viewBox="0 0 12.2 12"><rect x="0" y="0" width="12.2" height="12" rx="1.8" fill="#eef1f8"/><rect x="2.3" y="2.6" width="7.6" height="1.1" fill="#6777bf"/><rect x="2.3" y="5.1" width="7.6" height="1.1" fill="#6777bf"/><rect x="2.3" y="7.6" width="5" height="1.1" fill="#6777bf"/></svg>
<svg class="abs" style="left:1192.50px;top:13.50px;" width="14" height="11" viewBox="0 0 14 11"><path fill="#eef1f8" d="M0 3.4h2.6L7.6 0.6v9L2.6 7H2.4l0.8 3H1.6L0.9 7H0z"/><path stroke="#eef1f8" stroke-width="1.2" stroke-linecap="round" d="M10.2 1.2l1.6-1M10.6 5.1h2.6M10.2 9l1.6 1"/></svg>
<svg class="abs" style="left:1227.80px;top:12.60px;" width="13.5" height="13.5" viewBox="0 0 14 14"><circle cx="7" cy="7" r="6.2" fill="none" stroke="#eef1f8" stroke-width="1.3"/><path d="M4.9 5.3a2.1 2.1 0 1 1 3 1.9c-.6.3-.9.7-.9 1.3v.5" fill="none" stroke="#eef1f8" stroke-width="1.3" stroke-linecap="round"/><circle cx="7" cy="10.6" r=".8" fill="#eef1f8"/></svg>
<svg class="abs" style="left:1260.80px;top:2.90px;" width="32" height="32" viewBox="0 0 32 32"><defs><clipPath id="av"><circle cx="16" cy="16" r="15.3"/></clipPath></defs><circle cx="16" cy="16" r="16" fill="#eef1fa"/><circle cx="16" cy="16" r="15.3" fill="#d8e1f6"/><g clip-path="url(#av)"><path d="M2.5 33c0-5.5 2.8-8.5 6.6-9.2h13.8c3.8.7 6.6 3.7 6.6 9.2z" fill="#f5b999"/><path d="M8.9 18.3C8.2 10.5 9 4.3 15.5 4.3S22.8 10.5 22.1 18.3z" fill="#15204a"/><rect x="13.8" y="16.5" width="3.4" height="6" fill="#f3b596"/><ellipse cx="15.5" cy="13.6" rx="4.3" ry="5" fill="#f6c2a3"/><path d="M10.6 12.2C11.2 8.2 13 6.8 15.5 6.8s4.3 1.4 4.9 5.4c-1.6-.9-3.2-1.6-4.2-2.8-1.2 1.2-3.6 2.2-5.6 2.8z" fill="#15204a"/><path d="M14.3 16.3q1.2.8 2.4 0" stroke="#fff" stroke-width=".9" fill="none"/><path d="M9.6 33V23.2c1.6-.6 2.6-.9 3.4-.9.6 1.6 1.4 2.2 2.5 2.2s1.9-.6 2.5-2.2c.8 0 1.8.3 3.4.9V33z" fill="#0f7cbf"/></g></svg>
<div class="t " style="left:1298.70px;top:13.44px;font-size:10.1px;line-height:12.12px;font-weight:normal;color:#eef1f8;-webkit-text-stroke:0.2px #eef1f8;letter-spacing:-0.35px">Maca</div>
</body></html>
